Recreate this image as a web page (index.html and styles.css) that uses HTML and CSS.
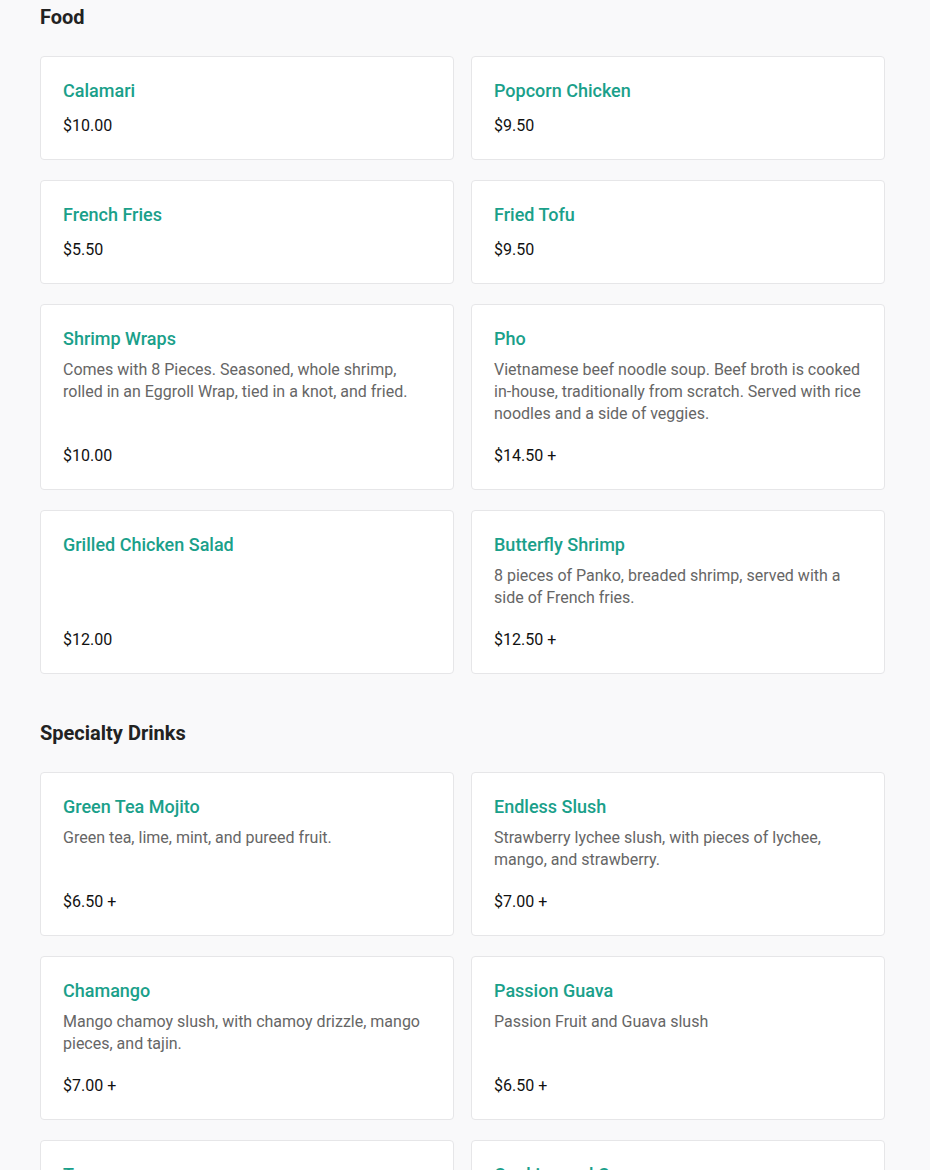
FILE: index.html
```html
<!DOCTYPE html>
<html lang="en">
<head>
<meta charset="utf-8">
<title>Menu</title>
<link rel="stylesheet" href="styles.css">
</head>
<body>
<main class="menu">
  <section class="section">
    <h2 class="section-title">Food</h2>
    <div class="grid">
      <div class="card"><div class="body"><div class="name">Calamari</div></div><div class="price">$10.00</div></div>
      <div class="card"><div class="body"><div class="name">Popcorn Chicken</div></div><div class="price">$9.50</div></div>
      <div class="card"><div class="body"><div class="name">French Fries</div></div><div class="price">$5.50</div></div>
      <div class="card"><div class="body"><div class="name">Fried Tofu</div></div><div class="price">$9.50</div></div>
      <div class="card"><div class="body"><div class="name">Shrimp Wraps</div><p class="desc">Comes with 8 Pieces. Seasoned, whole shrimp, rolled in an Eggroll Wrap, tied in a knot, and fried.</p></div><div class="price">$10.00</div></div>
      <div class="card"><div class="body"><div class="name">Pho</div><p class="desc">Vietnamese beef noodle soup. Beef broth is cooked in-house, traditionally from scratch. Served with rice noodles and a side of veggies.</p></div><div class="price">$14.50 +</div></div>
      <div class="card"><div class="body"><div class="name">Grilled Chicken Salad</div></div><div class="price">$12.00</div></div>
      <div class="card"><div class="body"><div class="name">Butterfly Shrimp</div><p class="desc">8 pieces of Panko, breaded shrimp, served with a side of French fries.</p></div><div class="price">$12.50 +</div></div>
    </div>
  </section>
  <section class="section">
    <h2 class="section-title">Specialty Drinks</h2>
    <div class="grid">
      <div class="card"><div class="body"><div class="name">Green Tea Mojito</div><p class="desc">Green tea, lime, mint, and pureed fruit.</p></div><div class="price">$6.50 +</div></div>
      <div class="card"><div class="body"><div class="name">Endless Slush</div><p class="desc">Strawberry lychee slush, with pieces of lychee, mango, and strawberry.</p></div><div class="price">$7.00 +</div></div>
      <div class="card"><div class="body"><div class="name">Chamango</div><p class="desc">Mango chamoy slush, with chamoy drizzle, mango pieces, and tajin.</p></div><div class="price">$7.00 +</div></div>
      <div class="card"><div class="body"><div class="name">Passion Guava</div><p class="desc">Passion Fruit and Guava slush</p></div><div class="price">$6.50 +</div></div>
      <div class="card"><div class="body"><div class="name">Taro</div><p class="desc">Taro milk slush.</p></div><div class="price">$6.50 +</div></div>
      <div class="card"><div class="body"><div class="name">Cookies and Cream</div><p class="desc">Cookies and cream slush.</p></div><div class="price">$6.50 +</div></div>
    </div>
  </section>
</main>
</body>
</html>
```
FILE: styles.css
```css
* { box-sizing: border-box; }
html, body { margin: 0; padding: 0; }
body {
  background: #f9f9fa;
  font-family: Roboto, "Liberation Sans", Arial, sans-serif;
  color: #222;
}
.menu {
  width: 845px;
  margin-left: 40px;
  padding-top: 3px;
  display: flex;
  flex-direction: column;
  gap: 45px;
}
.section-title {
  margin: 0 0 25px 0;
  font-size: 20px;
  line-height: 28px;
  font-weight: 700;
  color: #222;
}
.grid {
  display: grid;
  grid-template-columns: 1fr 1fr;
  column-gap: 17px;
  row-gap: 20px;
}
.card {
  background: #fff;
  border: 1px solid #e6e6e8;
  border-radius: 4px;
  padding: 23px 22px 22px 22px;
  display: flex;
  flex-direction: column;
}
.body {
  flex: 1;
  margin-bottom: 13px;
}
.name {
  font-size: 18px;
  line-height: 22px;
  font-weight: 500;
  color: #1aa08a;
}
.desc {
  margin: 9px 0 7px 0;
  font-size: 16px;
  line-height: 22px;
  color: #666;
}
.price {
  font-size: 16px;
  line-height: 22px;
  font-weight: 400;
  color: #111;
}
```
